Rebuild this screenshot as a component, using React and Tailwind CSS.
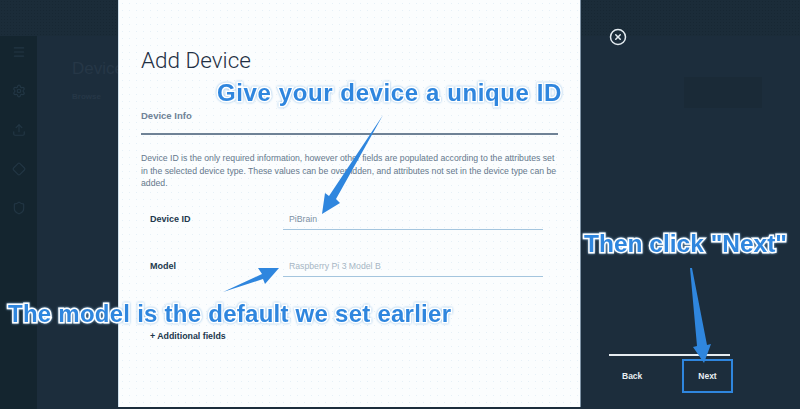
import React from 'react';
import { CircleX, Menu, Settings, Upload, Diamond, Shield } from 'lucide-react';

const ditherDark = 'bg-[#1b2c39] bg-[radial-gradient(#172733_0.6px,transparent_0.6px)] [background-size:3px_3px]';
const ditherSide = 'bg-[#14252f] bg-[radial-gradient(#1a2d3a_0.6px,transparent_0.6px)] [background-size:4px_4px]';
const calloutText =
  "absolute whitespace-nowrap font-['Liberation_Sans',sans-serif] font-bold text-[#2f86de] [-webkit-text-stroke:3px_#ffffff] [paint-order:stroke_fill] drop-shadow-[0_0_1px_#8fbfe8]";

const TopBar = () => <div className={`h-9 shrink-0 ${ditherDark}`} />;

const FormRow = ({ label, value, valueClass }) => (
  <div className="flex items-end pl-[9px]">
    <div className="w-[133px] pb-[4px] text-[9px] leading-[13px] font-bold text-[#22384d]">{label}</div>
    <div className={`w-[260px] border-b-[1.5px] border-[#a4c5de] pl-[6px] pt-[1px] pb-[3.5px] text-[8.7px] leading-[13px] ${valueClass}`}>
      {value}
    </div>
  </div>
);

const App = () => {
  return (
    <div className="relative flex h-[409px] w-[800px] overflow-hidden bg-[#1c2d3c] font-['Liberation_Sans',sans-serif]">
      {/* Page behind the modal, left */}
      <div className="flex w-[118px] shrink-0 flex-col">
        <TopBar />
        <div className="flex flex-1">
          <div className={`flex w-[37px] shrink-0 flex-col items-center gap-[25px] pt-[9px] text-[#223644] ${ditherSide}`}>
            <Menu size={14} />
            <Settings size={14} />
            <Upload size={14} />
            <Diamond size={14} />
            <Shield size={14} />
          </div>
          <div className="flex-1 overflow-hidden pl-[35px] pt-[23px] text-[#263747]">
            <div className="whitespace-nowrap text-[17px] leading-5">Devices</div>
            <div className="mt-[13px] text-[8px] font-bold leading-[10px]">Browse</div>
          </div>
        </div>
      </div>

      {/* Modal */}
      <div className="mb-[2px] flex w-[463px] shrink-0 flex-col border-x border-x-[#7f93a5] border-l-[#cfe0ec] bg-[#fbfdfe] bg-[radial-gradient(#e6f0f7_0.6px,transparent_0.6px)] pl-[22px] pr-[22px] pt-[46px] [background-size:7px_7px]">
        <h1 className="font-['Roboto',sans-serif] text-[22.5px] font-light leading-7 text-[#1f3044]">Add Device</h1>
        <div className="mt-[36px] border-b-2 border-[#6f8296] pb-[11px] text-[9.5px] font-bold leading-3 text-[#6f8296]">Device Info</div>
        <p className="mt-[17px] text-[8.7px] leading-[12.5px] text-[#64788c]">
          Device ID is the only required information, however other fields are populated according to the attributes set
          in the selected device type. These values can be overridden, and attributes not set in the device type can be
          added.
        </p>
        <div className="mt-[22px] flex flex-col gap-[28.5px]">
          <FormRow label="Device ID" value="PiBrain" valueClass="text-[#7c90a3]" />
          <FormRow label="Model" value="Raspberry Pi 3 Model B" valueClass="text-[#a6b6c4]" />
        </div>
        <div className="mt-[53px] pl-[9px] text-[8.8px] font-bold leading-3 text-[#22384d]">+ Additional fields</div>
      </div>

      {/* Page behind the modal, right */}
      <div className="flex flex-1 flex-col">
        <TopBar />
        <div className="ml-[103px] mt-[41px] h-[31px] w-[78px] bg-[#1a2a37]" />
        <div className="mt-auto pb-[16px] pl-[28px]">
          <div className="h-[2px] w-[121px] bg-[#e6ecf0]" />
          <div className="mt-[3px] flex h-[34px] items-center text-[8.5px] font-bold text-[#e8eef2]">
            <div className="w-[73px] pl-[13px]">Back</div>
            <div className="flex h-full w-[51px] items-center justify-center border-2 border-[#2f86de]">Next</div>
          </div>
        </div>
      </div>

      {/* Close button */}
      <CircleX size={18} strokeWidth={2} className="absolute left-[609px] top-[28px] text-[#e4ecf1]" />

      {/* Annotations */}
      <svg className="absolute inset-0" width="800" height="409" viewBox="0 0 800 409">
        <polygon fill="#2f86de" points="383,115 336,199 340,203 322,214 325,193 329,196" />
        <polygon fill="#2f86de" points="223,292 262,274 258,268 279,268 265,284 263,279" />
        <polygon fill="#2f86de" points="690,268 692,268 707,345 711,344 704,363 693,347 697,346" />
      </svg>
      <div className={`${calloutText} left-[217px] top-[78px] text-[24px] leading-[30px] tracking-[0.6px]`}>Give your device a unique ID</div>
      <div className={`${calloutText} left-[8px] top-[299px] text-[24px] leading-[30px] tracking-[0.25px]`}>The model is the default we set earlier</div>
      <div className={`${calloutText} left-[584px] top-[229px] text-[24.5px] leading-[30px]`}>Then click "Next"</div>
    </div>
  );
};

export default App;
